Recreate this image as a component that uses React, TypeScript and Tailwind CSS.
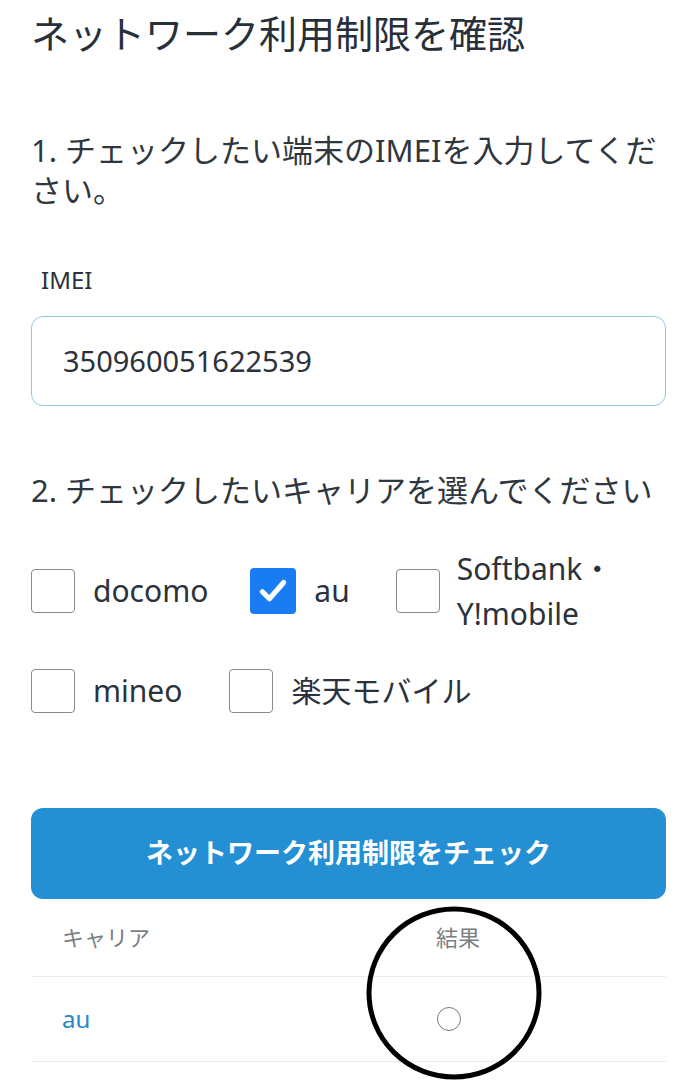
import React from "react";

function Box({ checked }: { checked: boolean }) {
  if (checked) {
    return (
      <span className="flex h-[46px] w-[46px] shrink-0 items-center justify-center rounded-[4px] bg-[#1a7cf2]">
        <svg width="34" height="34" viewBox="0 0 24 24" fill="none">
          <path d="M4.5 12.5l5 5L19.5 6" stroke="#fff" strokeWidth="3.6" strokeLinecap="round" strokeLinejoin="round" />
        </svg>
      </span>
    );
  }
  return <span className="block h-[44px] w-[44px] shrink-0 rounded-[4px] border-[1.5px] border-[#8a8a8a] bg-white" />;
}

export default function App() {
  return (
    <div
      className="relative min-h-[1080px] w-[697px] overflow-hidden bg-white text-[#2b323b]"
      style={{ fontFamily: '"Noto Sans", "Noto Sans CJK JP", sans-serif' }}
    >
      <div className="px-[31px]">
        <h1 className="pt-[10px] text-[38px] leading-[46px] font-normal text-[#27303a]">
          ネットワーク利用制限を確認
        </h1>

        <p className="mt-[74px] text-[31px] leading-[40px] text-[#2f363e]">
          1. チェックしたい端末のIMEIを入力してください。
        </p>

        <label className="mt-[55px] block pl-[10px] text-[24px] leading-[30px]">IMEI</label>
        <div className="mt-[21px] flex h-[90px] items-center rounded-[12px] border border-[#93c6df] px-[31px]">
          <span className="text-[29px] text-[#2b323b]">350960051622539</span>
        </div>

        <p className="mt-[64px] text-[31px] leading-[40px] text-[#2f363e]">
          2. チェックしたいキャリアを選んでください
        </p>

        {/* carrier checkboxes */}
        <div className="mt-[36px] flex items-center">
          <div className="mr-[42px] flex items-center gap-[18px]">
            <Box checked={false} />
            <span className="text-[30px] leading-[40px]">docomo</span>
          </div>
          <div className="mr-[46px] flex items-center gap-[18px]">
            <Box checked={true} />
            <span className="text-[30px] leading-[40px]">au</span>
          </div>
          <div className="flex items-center gap-[17px]">
            <Box checked={false} />
            <span className="text-[30px] leading-[45px]">
              Softbank・
              <br />
              Y!mobile
            </span>
          </div>
        </div>
        <div className="mt-[33px] flex items-center">
          <div className="mr-[47px] flex items-center gap-[18px]">
            <Box checked={false} />
            <span className="text-[30px] leading-[40px]">mineo</span>
          </div>
          <div className="flex items-center gap-[18px]">
            <Box checked={false} />
            <span className="text-[30px] leading-[40px]">楽天モバイル</span>
          </div>
        </div>

        <button className="mt-[95px] flex h-[91px] w-full items-center justify-center rounded-[12px] bg-[#2490d3] text-[27px] font-bold text-white">
          ネットワーク利用制限をチェック
        </button>

        {/* results table */}
        <div className="grid grid-cols-[219px_1fr] text-[22px]">
          <div className="flex h-[78px] items-center border-b border-[#ececec] pl-[31px] text-[#7a7f85]">キャリア</div>
          <div className="flex h-[78px] items-center justify-center border-b border-[#ececec] text-[#7a7f85]">結果</div>
          <div className="flex h-[85px] items-center border-b border-[#ececec] pl-[31px] text-[24px] text-[#2a86c1]">au</div>
          <div className="flex h-[85px] items-center justify-center border-b border-[#ececec]">
            <span className="mr-[18px] block h-[24px] w-[24px] rounded-full border-[1.5px] border-[#777]" />
          </div>
        </div>
      </div>

      {/* hand-drawn marker around the result */}
      <svg className="absolute left-[364px] top-[904px]" width="180" height="178" viewBox="0 0 180 178" fill="none">
        <ellipse cx="90" cy="89" rx="85" ry="84" stroke="#000" strokeWidth="5" />
      </svg>
    </div>
  );
}
